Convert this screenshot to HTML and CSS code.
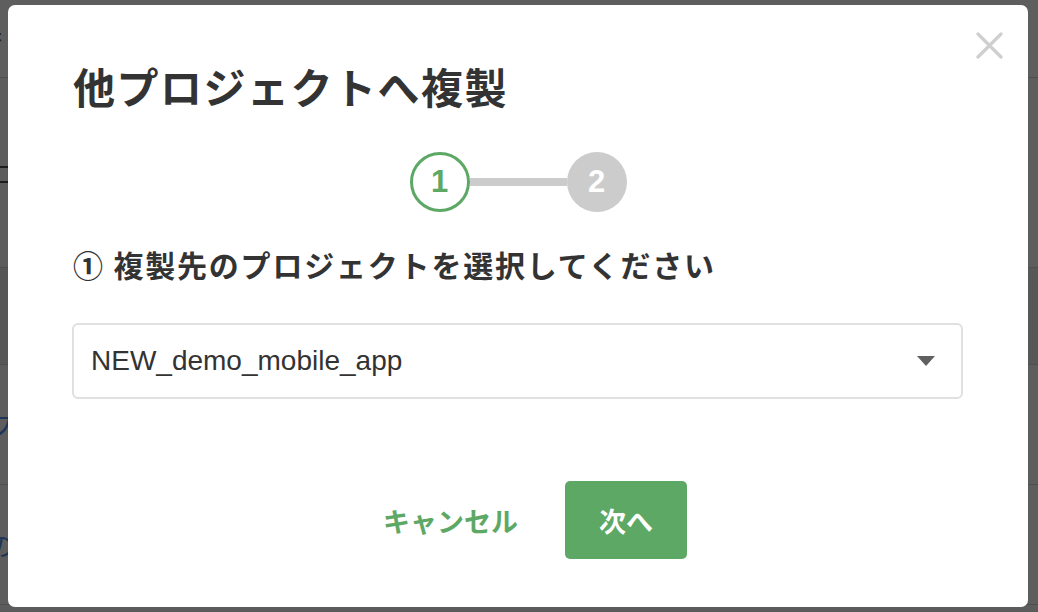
FILE: index.html
```html
<!DOCTYPE html>
<html lang="ja">
<head>
<meta charset="utf-8">
<title>他プロジェクトへ複製</title>
<link rel="stylesheet" href="styles.css">
</head>
<body>
<div class="page">
  <div class="page-row row-a"><span class="page-glyph">扌</span></div>
  <div class="page-row row-b"><span class="page-glyph">ロ</span></div>
  <div class="page-row row-c"></div>
  <div class="page-row row-d"><span class="page-glyph blue">フ</span></div>
  <div class="page-row row-e"><span class="page-glyph blue">の</span></div>
</div>
<div class="overlay">
  <div class="modal">
    <button class="close" aria-label="閉じる">
      <svg width="27" height="27" viewBox="0 0 27 27"><path d="M2 2 L25 25 M25 2 L2 25" stroke="#cfcfcf" stroke-width="3.2" stroke-linecap="round"/></svg>
    </button>
    <h1 class="title">他プロジェクトへ複製</h1>
    <div class="stepper">
      <div class="step step-active">1</div>
      <div class="step-line"></div>
      <div class="step step-todo">2</div>
    </div>
    <h2 class="subtitle">① 複製先のプロジェクトを選択してください</h2>
    <div class="select">
      <span class="select-value">NEW_demo_mobile_app</span>
      <span class="caret"></span>
    </div>
    <div class="actions">
      <button class="btn btn-cancel">キャンセル</button>
      <button class="btn btn-next">次へ</button>
    </div>
  </div>
</div>
</body>
</html>
```

FILE: styles.css
```css
* { box-sizing: border-box; }
html, body { margin: 0; padding: 0; }
body {
  width: 1038px;
  height: 612px;
  overflow: hidden;
  background: #5c5c5c;
  font-family: "Noto Sans CJK JP", "Liberation Sans", sans-serif;
}

.page { display: flex; flex-direction: column; }
.page-row { border-bottom: 1px solid #4f4f4f; display: flex; align-items: center; font-size: 26px; color: #1e1e1e; }
.row-a { height: 78px; background: #5e5e5e; }
.row-b { height: 190px; background: #5d5d5d; }
.row-c { height: 97px; background: #575757; }
.row-d { height: 120px; background: #5d5d5d; }
.row-e { height: 120px; background: #5d5d5d; }
.page-glyph { margin-left: -12px; }
.page-glyph.blue { color: #1d3556; }

.overlay {
  position: fixed;
  inset: 0;
  display: flex;
  padding: 5px 10px 5px 8px;
}

.modal {
  position: relative;
  flex: 1;
  background: #fff;
  border-radius: 7px;
  padding: 61px 65px 0 65px;
  display: flex;
  flex-direction: column;
}

.close {
  position: absolute;
  top: 27px;
  right: 25px;
  width: 27px;
  height: 27px;
  padding: 0;
  border: 0;
  background: none;
  display: block;
}
.close svg { display: block; }

.title {
  margin: 0;
  font-size: 42px;
  line-height: 40px;
  font-weight: 700;
  color: #333;
  letter-spacing: 1.5px;
}

.stepper {
  margin-top: 46px;
  display: flex;
  align-items: center;
  justify-content: center;
}
.step {
  width: 60px;
  height: 60px;
  border-radius: 50%;
  display: flex;
  align-items: center;
  justify-content: center;
  font-family: "Liberation Sans", sans-serif;
  font-weight: 700;
  font-size: 31px;
}
.step-active { border: 3px solid #5ea866; color: #5ea866; }
.step-todo { background: #cccccc; color: #fff; }
.step-line { width: 97px; height: 8px; background: #cccccc; }

.subtitle {
  margin: 38px 0 0 0;
  font-size: 30px;
  line-height: 28px;
  font-weight: 700;
  color: #333;
  letter-spacing: 1.8px;
}

.select {
  margin-top: 45px;
  height: 76px;
  margin-left: -1px;
  border: 2px solid #e0e0e0;
  border-radius: 6px;
  display: flex;
  align-items: center;
  padding: 0 26px 0 17px;
}
.select-value {
  flex: 1;
  font-family: "Liberation Sans", sans-serif;
  font-size: 28px;
  color: #333;
}
.caret {
  width: 0;
  height: 0;
  border-left: 9px solid transparent;
  border-right: 9px solid transparent;
  border-top: 10px solid #606060;
}

.actions {
  margin-top: 82px;
  display: flex;
  justify-content: center;
  gap: 13px;
}
.btn {
  height: 78px;
  padding: 0 34px;
  border: 0;
  border-radius: 5px;
  font-family: "Noto Sans CJK JP", sans-serif;
  font-weight: 700;
  font-size: 27px;
}
.btn-cancel { background: #fff; color: #5ea866; }
.btn-next { background: #5ea866; color: #fff; }
```
